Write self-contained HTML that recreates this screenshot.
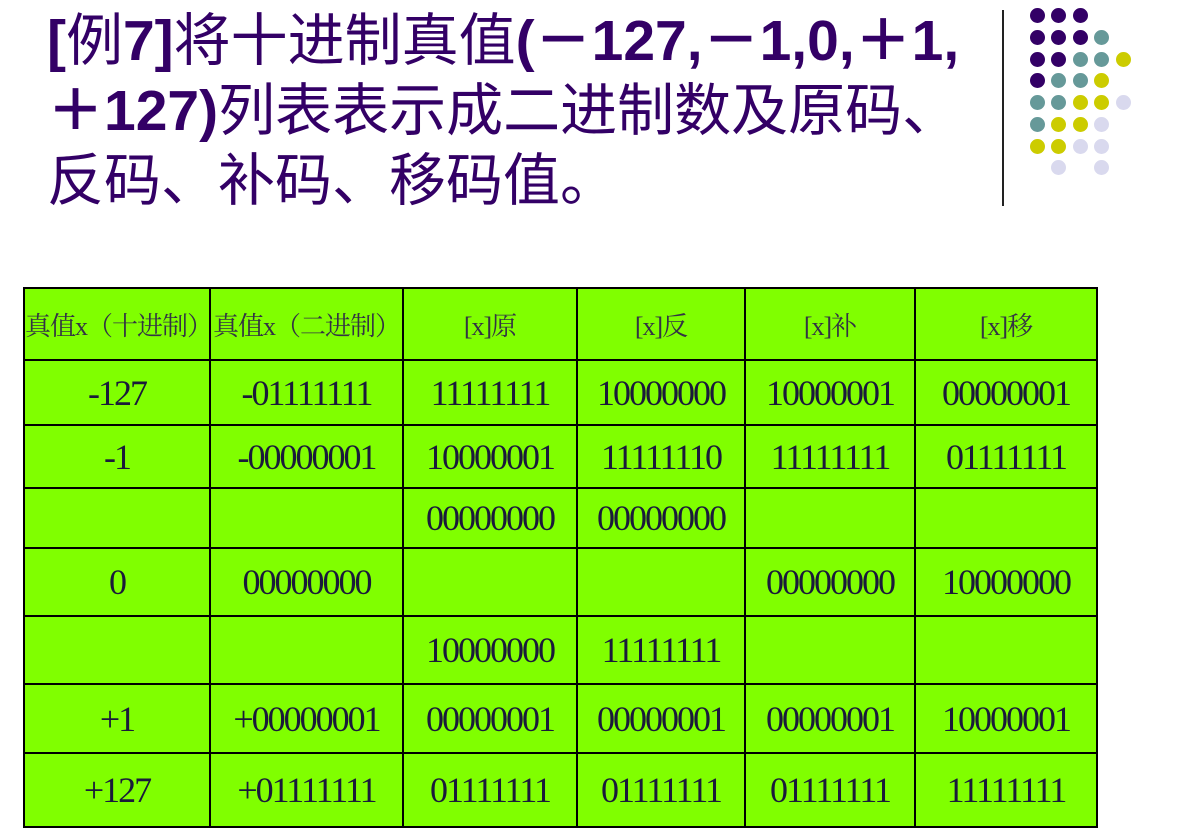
<!DOCTYPE html>
<html><head><meta charset="utf-8"><style>
body{margin:0;width:1194px;height:829px;background:#fff;overflow:hidden;position:relative;font-family:"Liberation Sans","Noto Sans CJK SC",sans-serif}
.t{position:absolute;left:47px;top:6px;color:#330066;font-size:57px;line-height:70px;width:960px;white-space:nowrap;letter-spacing:0px}
.t b{font-weight:bold}
.vl{position:absolute;left:1002px;top:10px;width:2px;height:196px;background:#222}
.d{position:absolute;width:15px;height:15px;border-radius:50%}
.P{background:#330066}.T{background:#669999}.Y{background:#cccc00}.L{background:#d9d9ee}
table{position:absolute;left:23px;top:287px;border-collapse:collapse;background:#80ff00}
td{border:2px solid #000;padding:0;text-align:center;font-family:"Liberation Serif","Noto Serif CJK SC",serif;color:#1a1a3a;font-size:36px;letter-spacing:-2px}
td.h{font-size:26px;color:#334;letter-spacing:-1px}
</style></head><body>
<div class="t"><b>[</b>例<b>7]</b>将十进制真值<b>(－127,－1,0,＋1,</b><br><b>＋127)</b>列表表示成二进制数及原码、<br>反码、补码、移码值。</div>
<div class="vl"></div>
<table>
<colgroup><col style="width:186px"><col style="width:193px"><col style="width:174px"><col style="width:168px"><col style="width:170px"><col style="width:182px"></colgroup>
<tr style="height:72px"><td class="h">真值x（十进制）</td><td class="h">真值x（二进制）</td><td class="h">[x]原</td><td class="h">[x]反</td><td class="h">[x]补</td><td class="h">[x]移</td></tr>
<tr style="height:65px"><td>-127</td><td>-01111111</td><td>11111111</td><td>10000000</td><td>10000001</td><td>00000001</td></tr>
<tr style="height:63px"><td>-1</td><td>-00000001</td><td>10000001</td><td>11111110</td><td>11111111</td><td>01111111</td></tr>
<tr style="height:60px"><td></td><td></td><td>00000000</td><td>00000000</td><td></td><td></td></tr>
<tr style="height:68px"><td>0</td><td>00000000</td><td></td><td></td><td>00000000</td><td>10000000</td></tr>
<tr style="height:68px"><td></td><td></td><td>10000000</td><td>11111111</td><td></td><td></td></tr>
<tr style="height:69px"><td>+1</td><td>+00000001</td><td>00000001</td><td>00000001</td><td>00000001</td><td>10000001</td></tr>
<tr style="height:74px"><td>+127</td><td>+01111111</td><td>01111111</td><td>01111111</td><td>01111111</td><td>11111111</td></tr>
</table>
<div class="d P" style="left:1030px;top:8px"></div><div class="d P" style="left:1051px;top:8px"></div><div class="d P" style="left:1073px;top:8px"></div>
<div class="d P" style="left:1030px;top:30px"></div><div class="d P" style="left:1051px;top:30px"></div><div class="d P" style="left:1073px;top:30px"></div><div class="d T" style="left:1094px;top:30px"></div>
<div class="d P" style="left:1030px;top:52px"></div><div class="d P" style="left:1051px;top:52px"></div><div class="d T" style="left:1073px;top:52px"></div><div class="d T" style="left:1094px;top:52px"></div><div class="d Y" style="left:1116px;top:52px"></div>
<div class="d P" style="left:1030px;top:73px"></div><div class="d T" style="left:1051px;top:73px"></div><div class="d T" style="left:1073px;top:73px"></div><div class="d Y" style="left:1094px;top:73px"></div>
<div class="d T" style="left:1030px;top:95px"></div><div class="d T" style="left:1051px;top:95px"></div><div class="d Y" style="left:1073px;top:95px"></div><div class="d Y" style="left:1094px;top:95px"></div><div class="d L" style="left:1116px;top:95px"></div>
<div class="d T" style="left:1030px;top:117px"></div><div class="d Y" style="left:1051px;top:117px"></div><div class="d Y" style="left:1073px;top:117px"></div><div class="d L" style="left:1094px;top:117px"></div>
<div class="d Y" style="left:1030px;top:139px"></div><div class="d Y" style="left:1051px;top:139px"></div><div class="d L" style="left:1073px;top:139px"></div><div class="d L" style="left:1094px;top:139px"></div>
<div class="d L" style="left:1051px;top:160px"></div><div class="d L" style="left:1094px;top:160px"></div>
</body></html>
